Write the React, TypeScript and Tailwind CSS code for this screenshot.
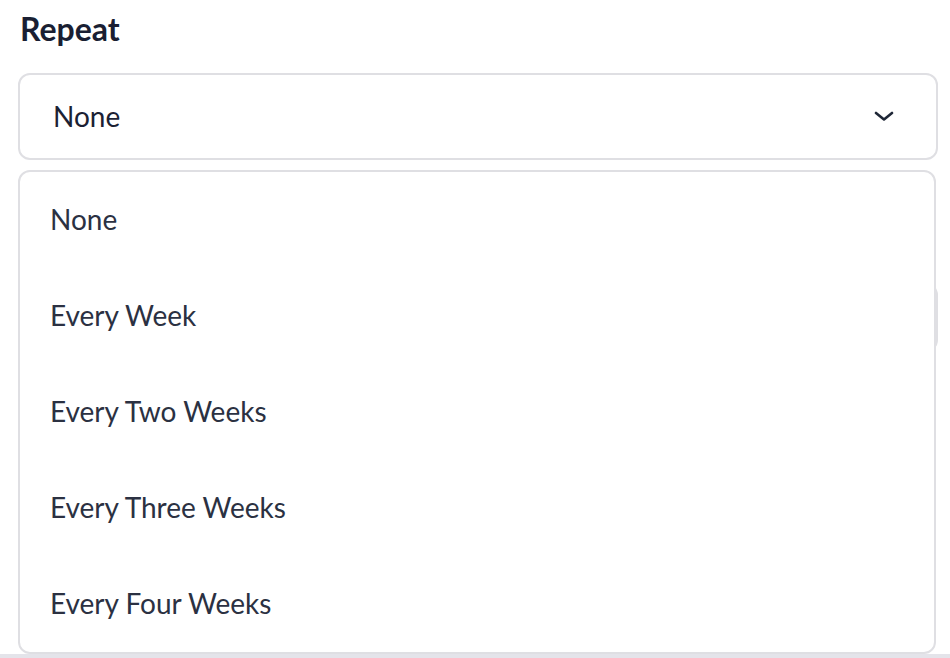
import { useState } from "react";

const options = [
  "None",
  "Every Week",
  "Every Two Weeks",
  "Every Three Weeks",
  "Every Four Weeks",
];

function Chevron() {
  return (
    <svg width="20" height="10" viewBox="0 0 20 10" fill="none">
      <path
        d="M2 2l8 6.5L18 2"
        stroke="#1f2737"
        strokeWidth="2.6"
        strokeLinecap="round"
        strokeLinejoin="round"
      />
    </svg>
  );
}

function App() {
  const [value] = useState("None");
  return (
    <div
      className="relative h-[658px] w-[950px] overflow-hidden bg-white"
      style={{ fontFamily: "Lato, 'Open Sans', sans-serif" }}
    >
      <div className="flex flex-col px-[18px] pt-[11px]">
        <h2 className="pl-[2px] text-[32px] font-bold leading-9 text-[#1a1f33]">
          Repeat
        </h2>
        <button className="mt-[26px] flex h-[87px] w-[920px] items-center justify-between rounded-[12px] border-2 border-[#dfdfe3] pb-[2px] pl-[33px] pr-[42px] text-left">
          <span className="text-[28px] text-[#1b2133]">{value}</span>
          <Chevron />
        </button>
        {/* field under the open list */}
        <div className="mt-[123px] h-[69px] w-[920px] rounded-[12px] border-2 border-[#dfdfe3]" />
      </div>
      <div className="absolute bottom-0 left-0 h-[4px] w-full bg-[#e4e4ea]" />

      <ul className="absolute left-[18px] top-[170px] w-[918px] rounded-[12px] border-2 border-[#dfdfe3] bg-white">
        {options.map((o) => (
          <li
            key={o}
            className="flex h-[96px] items-center pb-[2px] pl-[30px] text-[28px] text-[#2b3142]"
          >
            {o}
          </li>
        ))}
      </ul>
    </div>
  );
}

export default App;
